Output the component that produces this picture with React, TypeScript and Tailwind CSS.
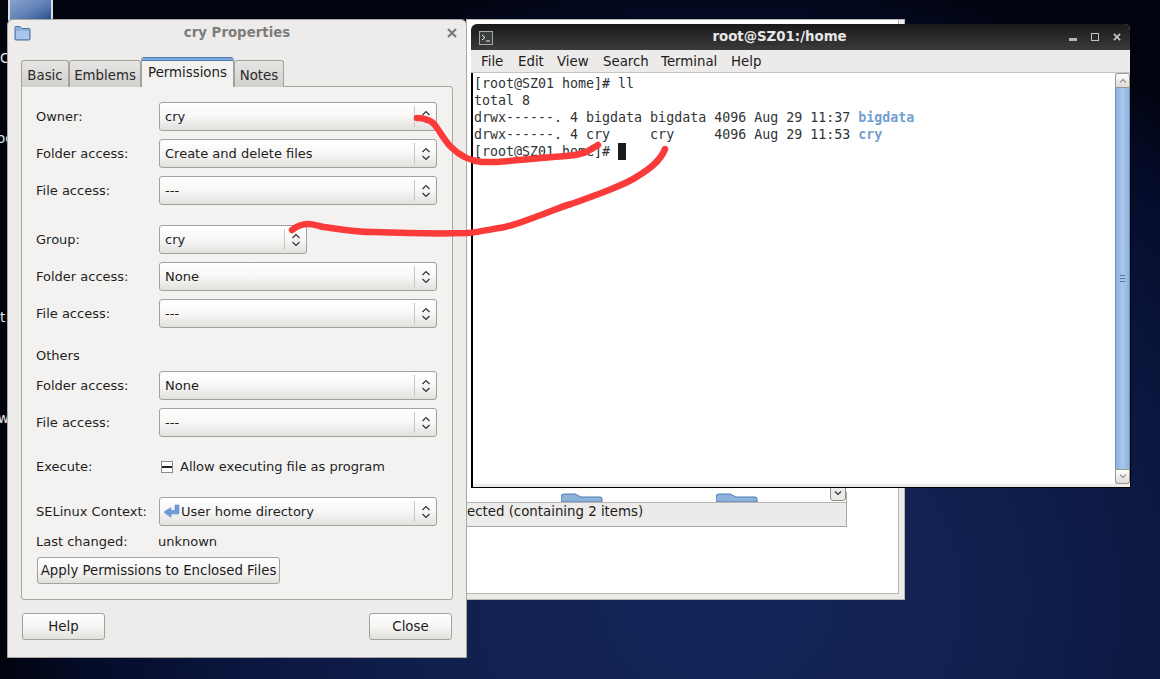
import { ReactNode } from "react";

function FolderIcon() {
  return (
    <svg width="17" height="16" viewBox="0 0 17 16">
      <path d="M1 4.5V2.5Q1 1.5 2 1.5H6L8 3.5H15Q16 3.5 16 4.5V14Q16 15 15 15H2Q1 15 1 14Z" fill="#8fb2da" stroke="#3f6ea8" />
      <path d="M2 6H15V14H2Z" fill="#a9c6e8" />
    </svg>
  );
}

function Chevrons() {
  return (
    <svg width="10" height="16" viewBox="0 0 10 16" fill="none" stroke="#2e3436" strokeWidth="1.2">
      <path d="M1.5 6L5 2.5L8.5 6" />
      <path d="M1.5 10L5 13.5L8.5 10" />
    </svg>
  );
}

function Combo({ value, icon, short }: { value: string; icon?: ReactNode; short?: boolean }) {
  return (
    <div
      className={`flex h-[29px] items-center rounded-[3px] border border-[#a3a19d] bg-gradient-to-b from-white via-[#f8f7f6] to-[#e3e1de] ${
        short ? "w-[148px]" : "w-[278px]"
      }`}
    >
      <div className={`flex min-w-0 flex-1 items-center text-[#1c1c1c] ${icon ? "gap-[1px] pl-[3px]" : "pl-[5px]"}`}>
        {icon}
        <span className="truncate text-[13px]">{value}</span>
      </div>
      <div className="h-[21px] w-px bg-[#c9c7c3]" />
      <div className="flex w-[21px] justify-center">
        <Chevrons />
      </div>
    </div>
  );
}

function Row({ label, value, short, icon, className }: { label: string; value: string; short?: boolean; icon?: ReactNode; className?: string }) {
  return (
    <div className={`flex items-center ${className ?? ""}`}>
      <span className="w-[123px] shrink-0 text-[13px] text-[#1f1f1f]">{label}</span>
      <Combo value={value} short={short} icon={icon} />
    </div>
  );
}

function PushButton({ children, className }: { children: ReactNode; className?: string }) {
  return (
    <div
      className={`flex h-[27px] items-center justify-center rounded-[3px] border border-[#a3a19d] bg-gradient-to-b from-white via-[#f6f5f4] to-[#e3e1de] text-[#1c1c1c] ${className ?? ""}`}
    >
      {children}
    </div>
  );
}

function Tab({ label, active, className }: { label: string; active?: boolean; className: string }) {
  if (active) {
    return (
      <div className={`relative z-10 flex h-[30px] flex-col overflow-hidden rounded-t-[3px] border-x border-[#a3a19d] bg-[#f3f2f0] ${className}`}>
        <div className="h-[4px] border-y border-[#4f7db3] bg-[#7da7d8]" />
        <div className="flex flex-1 justify-center pt-[2px] text-[#1c1c1c]">{label}</div>
      </div>
    );
  }
  return (
    <div className={`flex h-[27px] items-start justify-center rounded-t-[3px] border border-b-0 border-[#a3a19d] bg-gradient-to-b from-[#e6e5e3] to-[#d2d0cd] pt-[5px] text-[#2a2a2a] ${className}`}>
      {label}
    </div>
  );
}

function PropertiesDialog() {
  return (
    <div className="absolute left-[7px] top-[19px] flex h-[639px] w-[460px] flex-col rounded-t-[6px] border border-[#a9a7a3] bg-[#edecea] font-['DejaVu_Sans',sans-serif] text-[13.33px]">
      <div className="relative flex h-[26px] shrink-0 items-center justify-center">
        <div className="absolute left-[6px] top-[5px]">
          <FolderIcon />
        </div>
        <span className="font-bold text-[#7c7c7c]">cry Properties</span>
        <svg className="absolute right-[9px] top-[8px]" width="10" height="10" viewBox="0 0 10 10" stroke="#777" strokeWidth="2">
          <path d="M1 1L9 9M9 1L1 9" />
        </svg>
      </div>
      <div className="flex-1 px-[13px] pt-[11px]">
        <div className="flex h-[30px] items-end">
          <Tab label="Basic" className="w-[48px]" />
          <Tab label="Emblems" className="w-[72px]" />
          <Tab label="Permissions" active className="w-[93px]" />
          <Tab label="Notes" className="w-[50px]" />
        </div>
        <div className="flex h-[514px] flex-col rounded-b-[3px] rounded-tr-[3px] border border-[#a9a7a3] bg-[#f3f2f0] pl-[14px] pt-[15px] -mt-px">
          <Row label="Owner:" value="cry" />
          <Row label="Folder access:" value="Create and delete files" className="mt-[8px]" />
          <Row label="File access:" value="---" className="mt-[8px]" />
          <Row label="Group:" value="cry" short className="mt-[20px]" />
          <Row label="Folder access:" value="None" className="mt-[8px]" />
          <Row label="File access:" value="---" className="mt-[8px]" />
          <div className="mt-[20px] h-[16px] text-[13px] leading-[16px] text-[#1f1f1f]">Others</div>
          <Row label="Folder access:" value="None" className="mt-[7px]" />
          <Row label="File access:" value="---" className="mt-[8px]" />
          <div className="mt-[21px] flex h-[18px] items-center text-[13px]">
            <span className="w-[125px] shrink-0 text-[#1f1f1f]">Execute:</span>
            <div className="flex h-[12px] w-[12px] items-center justify-center border border-[#8f8d89] bg-white">
              <div className="h-[2px] w-full bg-[#222]" />
            </div>
            <span className="ml-[7px] text-[#1f1f1f]">Allow executing file as program</span>
          </div>
          <Row
            label="SELinux Context:"
            value="User home directory"
            className="mt-[21px]"
            icon={
              <svg width="17" height="16" viewBox="0 0 17 16">
                <path d="M16 3V11.5H8V15L1 10L8 5.5V8.5H12V3Z" fill="#cfdbe8" />
                <path d="M16 1V9.5H8V13L1 8L8 3.5V6.5H12V1Z" fill="#6c9bdc" stroke="#5a8bcf" strokeWidth=".6" />
              </svg>
            }
          />
          <div className="mt-[7px] flex h-[17px] items-center text-[13px] text-[#1f1f1f]">
            <span className="w-[122px] shrink-0">Last changed:</span>
            <span>unknown</span>
          </div>
          <PushButton className="ml-[1px] mt-[7px] w-[243px]">Apply Permissions to Enclosed Files</PushButton>
        </div>
        <div className="mt-[13px] flex justify-between px-[1px]">
          <PushButton className="w-[83px]">Help</PushButton>
          <PushButton className="w-[83px]">Close</PushButton>
        </div>
      </div>
    </div>
  );
}

const termLines: ReactNode[] = [
  "[root@SZ01 home]# ll",
  "total 8",
  <>
    drwx------. 4 bigdata bigdata 4096 Aug 29 11:37 <span className="font-bold text-[#729fcf]">bigdata</span>
  </>,
  <>
    drwx------. 4 cry     cry     4096 Aug 29 11:53 <span className="font-bold text-[#729fcf]">cry</span>
  </>,
  <>
    [root@SZ01 home]# <span className="inline-block h-[17px] w-[8px] bg-[#1a1a1a] align-top" />
  </>,
];

function TerminalWindow() {
  return (
    <div className="absolute left-[471px] top-[24px] flex h-[464px] w-[660px] flex-col overflow-hidden rounded-t-[6px] border-b border-r border-black bg-[#ecebe9] font-['DejaVu_Sans',sans-serif] text-[13.33px]">
      <div className="relative flex h-[26px] shrink-0 items-center justify-center bg-gradient-to-b from-[#1a1a1a] to-[#3b3b3b] pr-[42px]">
        <div className="absolute left-[8px] top-[7px] flex h-[14px] w-[14px] items-center justify-center border border-[#a8a8a8] bg-[#3a3f3c]">
          <svg width="10" height="8" viewBox="0 0 10 8" fill="none" stroke="#eee" strokeWidth="1">
            <path d="M1 1L4 3.5L1 6M5 7H9" />
          </svg>
        </div>
        <span className="font-bold text-[#e8e8e8]">root@SZ01:/home</span>
        <div className="absolute right-[9px] top-[9px] flex items-start gap-[14px]">
          <div className="mt-[5px] h-[3px] w-[8px] bg-[#b5b5b5]" />
          <div className="h-[8px] w-[8px] border-[1.5px] border-[#c5c5c5]" />
          <svg width="8" height="8" viewBox="0 0 9 9" stroke="#c5c5c5" strokeWidth="2">
            <path d="M1 1L8 8M8 1L1 8" />
          </svg>
        </div>
      </div>
      <div className="flex h-[23px] shrink-0 items-center border-b border-[#c6c4c0] bg-[#ecebe9] pl-[10px] pt-[1px] text-[#1c1c1c]">
        <span className="w-[37px]">File</span>
        <span className="w-[39px]">Edit</span>
        <span className="w-[46px]">View</span>
        <span className="w-[58px]">Search</span>
        <span className="w-[70px]">Terminal</span>
        <span>Help</span>
      </div>
      <div className="flex min-h-0 flex-1 flex-col border-l-[2px] border-black">
        <div className="flex min-h-0 flex-1">
          <div className="flex-1 whitespace-pre bg-white pl-[1px] pt-[2px] font-['DejaVu_Sans_Mono',monospace] text-[13.3px] leading-[17px] text-[#2e3436]">
            {termLines.map((line, i) => (
              <div key={i} className="h-[17px]">
                {line}
              </div>
            ))}
          </div>
          <div className="flex w-[15px] flex-col bg-[#dcdad6]">
            <div className="flex h-[15px] items-center justify-center rounded-t-[3px] border border-[#9a9893] bg-gradient-to-b from-white to-[#dddbd8]">
              <svg width="8" height="5" viewBox="0 0 8 5" fill="none" stroke="#9a9893" strokeWidth="1.3">
                <path d="M1 4.5L4 1.5L7 4.5" />
              </svg>
            </div>
            <div className="flex flex-1 flex-col items-center justify-center gap-[2px] border-x border-[#6f94c0] bg-gradient-to-r from-[#8db1dc] via-[#a9c8ec] to-[#8fb3de]">
              <div className="h-px w-[5px] bg-[#4f77a8]" />
              <div className="h-px w-[5px] bg-[#4f77a8]" />
              <div className="h-px w-[5px] bg-[#4f77a8]" />
            </div>
            <div className="flex h-[15px] items-center justify-center rounded-b-[3px] border border-[#9a9893] bg-gradient-to-b from-white to-[#dddbd8]">
              <svg width="8" height="5" viewBox="0 0 8 5" fill="none" stroke="#9a9893" strokeWidth="1.3">
                <path d="M1 .5L4 3.5L7 .5" />
              </svg>
            </div>
          </div>
        </div>
        <div className="h-[3px] shrink-0 bg-[#ecebe9]" />
      </div>
    </div>
  );
}

function FolderTop() {
  return (
    <svg width="42" height="9" viewBox="0 0 42 9">
      <path d="M0 9V4Q0 1 3 1H14L20 4H39Q41 4 41 6V9Z" fill="#8fb2da" stroke="#4f7db3" />
    </svg>
  );
}

// file manager behind the two front windows, only its lower edge shows
function FileManagerWindow() {
  return (
    <div className="absolute left-[466px] top-[19px] flex h-[581px] w-[439px] flex-col border border-[#b8b6b2] bg-[#ecebe9] pb-[5px] pr-[5px] font-['DejaVu_Sans',sans-serif] text-[13.33px]">
      <div className="flex-1 border-b border-r border-[#b8b6b2] bg-white pt-[472px]">
        <div className="flex h-[35px] w-[380px] flex-col border-b border-r border-[#a9a7a3]">
          <div className="relative flex h-[10px] shrink-0 items-end bg-white pl-[94px]">
            <FolderTop />
            <div className="ml-[113px]">
              <FolderTop />
            </div>
            <div className="absolute bottom-[1px] right-0 flex h-[15px] w-[16px] items-center justify-center rounded-b-[3px] border border-[#8f8d89] bg-[#ecebe9]">
              <svg width="8" height="5" viewBox="0 0 8 5" fill="none" stroke="#333" strokeWidth="1.2">
                <path d="M1 .5L4 3.5L7 .5" />
              </svg>
            </div>
          </div>
          <div className="flex flex-1 items-start overflow-hidden border-t border-[#b8b6b2] bg-[#ecebe9] text-[#1c1c1c]">
            <span className="-mt-px">ected (containing 2 items)</span>
          </div>
        </div>
      </div>
    </div>
  );
}

export default function App() {
  return (
    <div className="relative h-[679px] w-[1160px] overflow-hidden bg-[radial-gradient(ellipse_720px_640px_at_62%_88%,#13245a_0%,#11214f_35%,#0b1740_65%,#050c2a_88%,#01040f_100%)]">
      {/* desktop icons cut off by the dialog */}
      <div className="absolute left-[8px] top-0 h-[22px] w-[45px] rounded-b-[2px] border-x-2 border-[#d8dbe2] bg-gradient-to-br from-[#8aa4cc] via-[#5f82b5] to-[#23488a]" />
      <span className="absolute left-0 top-[49px] font-['DejaVu_Sans',sans-serif] text-[13.33px] text-[#e8e8e8]">C</span>
      <span className="absolute left-[-3px] top-[129px] font-['DejaVu_Sans',sans-serif] text-[13.33px] text-[#e8e8e8]">oc</span>
      <span className="absolute left-[0px] top-[308px] font-['DejaVu_Sans',sans-serif] text-[13.33px] text-[#e8e8e8]">t</span>
      <span className="absolute left-[-2px] top-[409px] font-['DejaVu_Sans',sans-serif] text-[13.33px] text-[#e8e8e8]">w</span>

      <FileManagerWindow />
      <PropertiesDialog />
      <TerminalWindow />

      {/* hand drawn marks on top of the screenshot */}
      <svg className="pointer-events-none absolute inset-0" width="1160" height="679" fill="none" stroke="#fb3a3a" strokeWidth="6.5" strokeLinecap="round" strokeLinejoin="round">
        <path d="M417 118C424 118 430 120 434 124C440 131 444 140 451 147C460 156 470 161 482 162C500 163 525 159 553 157C565 156 578 156 586 152C591 149 595 147 598 145" />
        <path d="M292 230C297 226 302 224 308 224C314 224 318 226 324 227C340 229 355 232 372 232C400 233 435 234 467 233C480 232 492 229 505 227C518 224 527 220 538 216C550 212 560 207 571 204C583 200 593 196 604 192C616 187 628 183 638 176C648 170 660 162 665 149" />
      </svg>
    </div>
  );
}
